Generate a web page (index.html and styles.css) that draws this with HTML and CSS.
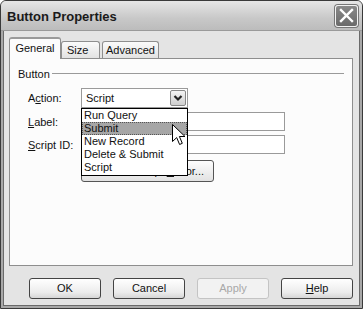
FILE: index.html
```html
<!DOCTYPE html>
<html lang="en">
<head>
<meta charset="UTF-8">
<title>Button Properties</title>
<link rel="stylesheet" href="styles.css">
</head>
<body>
<div class="window">
    <div class="titlebar">
        <span class="title">Button Properties</span>
        <span class="close">
            <svg width="21" height="20" viewBox="0 0 21 20">
                <path d="M5 4 L16 15 M16 4 L5 15" stroke="#fff" stroke-width="2.4" stroke-linecap="square"/>
            </svg>
        </span>
    </div>
    <div class="body">
        <div class="tabs">
            <div class="tab active">General</div>
            <div class="tab size">Size</div>
            <div class="tab adv">Advanced</div>
        </div>
        <div class="panel">
            <div class="group"><span>Button</span><span class="rule"></span></div>
            <div class="form">
                <label>A<u>c</u>tion:</label>
                <div class="combo">
                    <span>Script</span>
                    <span class="drop">
                        <svg width="10" height="8" viewBox="0 0 10 8"><path d="M1.5 2 L5 5.5 L8.5 2" stroke="#222" stroke-width="2.2" fill="none"/></svg>
                    </span>
                </div>
                <label class="row2"><u>L</u>abel:</label>
                <div class="field row2"></div>
                <label class="row3"><u>S</u>cript ID:</label>
                <div class="field row3"></div>
                <div class="editor"><span class="editor-text">Script <u>E</u>ditor...</span></div>

                <ul class="list">
                    <li>Run Query</li>
                    <li class="sel">Submit</li>
                    <li>New Record</li>
                    <li>Delete &amp; Submit</li>
                    <li>Script</li>
                </ul>
                <svg class="cursor" width="14" height="23" viewBox="0 0 14 23">
                    <path d="M0.5 0.5 L0.5 17.5 L4.7 13.6 L7.6 20.5 L10.3 19.3 L7.4 12.5 L13 12.5 Z" fill="#fff" stroke="#000" stroke-width="1"/>
                </svg>
            </div>
        </div>
        <div class="buttons">
            <div class="btn">OK</div>
            <div class="btn">Cancel</div>
            <div class="btn disabled">Apply</div>
            <div class="btn"><u>H</u>elp</div>
        </div>
    </div>
</div>
</body>
</html>
```
FILE: styles.css
```css
body {
    margin: 0;
    font-family: "Liberation Sans", Arial, sans-serif;
    font-size: 11px;
    color: #111;
}

.window {
    width: 363px;
    height: 309px;
    box-sizing: border-box;
    border: 1px solid #3a3a3a;
    border-radius: 6px 6px 0 0;
    background: #e4e4e4;
    box-shadow: inset 0 0 0 2px #a8a8a8, inset 0 0 0 3px #6a6a6a;
    overflow: hidden;
}

.titlebar {
    height: 29px;
    display: flex;
    align-items: center;
    justify-content: space-between;
    padding: 0 4px 0 6px;
    background: linear-gradient(#e6e6e6, #c8c8c8 60%, #bcbcbc);
    border-bottom: 1px solid #9a9a9a;
}

.title {
    font-weight: bold;
    font-size: 13px;
    color: #1a1a1a;
    padding-top: 2px;
}

.close {
    width: 21px;
    height: 20px;
    margin-top: 1px;
    border-radius: 3px;
    background: linear-gradient(#8a8a8a, #6a6a6a);
    border: 1px solid #f2f2f2;
    box-shadow: 0 0 0 1px #777;
    display: flex;
}

.body {
    padding: 6px 9px 0 8px;
}

.tabs {
    display: flex;
    align-items: flex-end;
    height: 21px;
}

.tab {
    height: 17px;
    line-height: 17px;
    box-sizing: border-box;
    text-align: center;
    border: 1px solid #8e8e8e;
    border-bottom: none;
    border-radius: 3px 3px 0 0;
    background: linear-gradient(#fafafa, #e2e2e2);
    margin-right: 2px;
}

.tab.size {
    width: 39px;
    text-align: left;
    padding-left: 5px;
}

.tab.adv {
    width: 57px;
}

.tab.active {
    width: 52px;
    height: 22px;
    line-height: 19px;
    margin-right: 0;
    background: #fcfcfc;
    border-top: 2px solid #9a9a9a;
    position: relative;
    z-index: 1;
    margin-bottom: -1px;
}

.panel {
    height: 208px;
    box-sizing: border-box;
    border: 1px solid #8e8e8e;
    background: #fcfcfc;
    padding: 8px 8px 0 18px;
}

.group {
    display: flex;
    align-items: center;
    margin-left: -10px;
    height: 13px;
}

.rule {
    flex: 1;
    border-top: 1px solid #9a9a9a;
    margin-left: 2px;
}

.form {
    position: relative;
    display: grid;
    grid-template-columns: 53px 204px;
    grid-template-rows: 20px 19px 19px 22px;
    row-gap: 4px;
    margin-top: 8px;
    align-items: center;
}

.form label {
    grid-column: 1;
}

.combo {
    width: 107px;
    height: 20px;
    box-sizing: border-box;
    border: 1px solid #9a9a9a;
    background: #fff;
    display: flex;
    align-items: center;
    justify-content: space-between;
    padding: 0 1px 0 4px;
}

.drop {
    width: 16px;
    height: 16px;
    box-sizing: border-box;
    border: 1px solid #888;
    border-radius: 2px;
    background: linear-gradient(#f4f4f4, #cfcfcf);
    display: flex;
    align-items: center;
    justify-content: center;
}

.field {
    grid-column: 2;
    height: 19px;
    box-sizing: border-box;
    border: 1px solid #9a9a9a;
    background: #fff;
}

.row2 { grid-row: 2; }
.row3 { grid-row: 3; }

.editor {
    grid-column: 2;
    grid-row: 4;
    width: 133px;
    height: 22px;
    box-sizing: border-box;
    margin-top: 4px;
    border: 1px solid #555;
    border-radius: 3px;
    background: linear-gradient(#fdfdfd, #e2e2e2);
    display: flex;
    justify-content: flex-end;
    padding-right: 9px;
    line-height: 20px;
}

.list {
    position: absolute;
    left: 53px;
    top: 20px;
    width: 107px;
    box-sizing: border-box;
    margin: 0;
    padding: 0 0 1px;
    list-style: none;
    border: 1px solid #000;
    background: #fff;
    z-index: 2;
}

.list li {
    height: 11px;
    line-height: 11px;
    padding-left: 1px;
    border: 1px dotted transparent;
}

.list li.sel {
    background: #a6a6a6;
    border-color: #555;
}

.cursor {
    position: absolute;
    left: 144px;
    top: 36px;
    z-index: 3;
}

.buttons {
    display: flex;
    justify-content: flex-end;
    gap: 12px;
    margin-top: 12px;
}

.btn {
    width: 72px;
    height: 21px;
    box-sizing: border-box;
    border: 1px solid #444;
    border-radius: 3px;
    background: linear-gradient(#ffffff, #ececec 70%, #d6d6d6);
    text-align: center;
    line-height: 19px;
}

.btn.disabled {
    border-color: #c4c4c4;
    background: #f2f2f2;
    color: #a8a8a8;
}
```
